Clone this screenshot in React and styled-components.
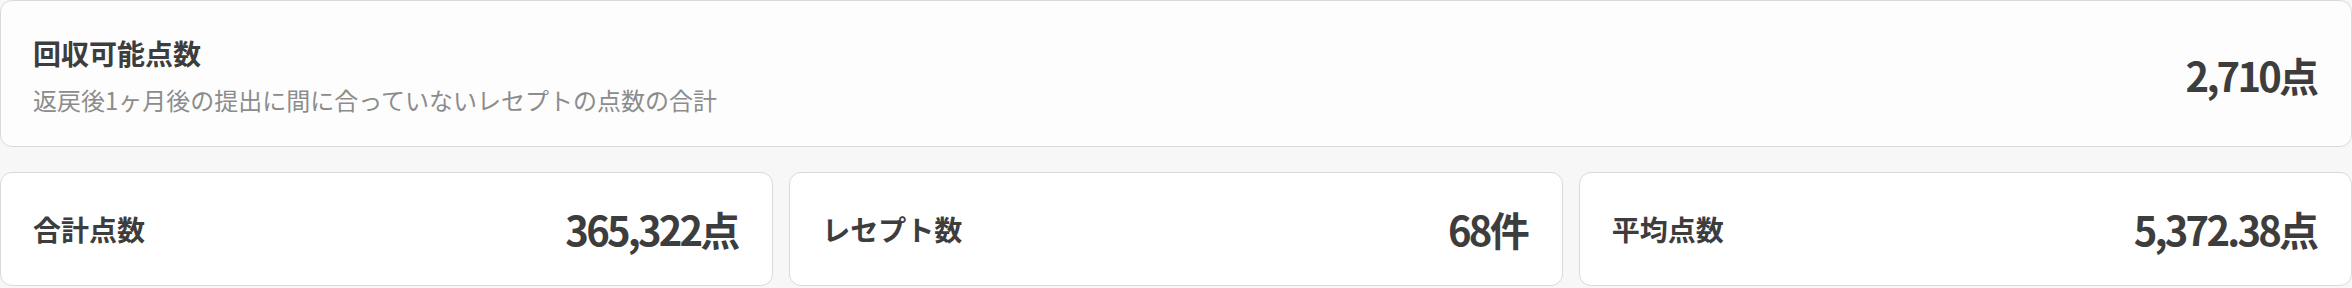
import React from "react";
import styled, { createGlobalStyle } from "styled-components";

const GlobalStyle = createGlobalStyle`
  html, body {
    margin: 0;
    padding: 0;
    background: #f7f7f7;
  }
  body {
    font-family: "Noto Sans CJK JP", "Noto Sans", sans-serif;
    color: #3d3d3d;
  }
  * { box-sizing: border-box; }
`;

const Page = styled.div`
  display: flex;
  flex-direction: column;
  gap: 25px;
`;

const Card = styled.div`
  display: flex;
  align-items: center;
  justify-content: space-between;
  background: #ffffff;
  border: 1px solid #d6d9dd;
  border-radius: 12px;
`;

const SummaryCard = styled(Card)`
  padding: 31px 32px 28px;
  background: #fdfdfd;
`;

const StatCard = styled(Card)`
  padding: 26px 32px;
`;

const TextBlock = styled.div`
  display: flex;
  flex-direction: column;
  gap: 8px;
`;

const Title = styled.div`
  font-size: 28px;
  font-weight: 700;
  line-height: 42px;
  color: #3d3d3d;
`;

const Description = styled.div`
  font-size: 24px;
  font-weight: 400;
  line-height: 36px;
  color: #8c8c8c;
`;

const Value = styled.div`
  font-size: 40px;
  font-weight: 700;
  line-height: 60px;
  letter-spacing: -0.07em;
  padding-right: 0.07em;
  color: #3d3d3d;
  white-space: nowrap;
`;

const Row = styled.div`
  display: grid;
  grid-template-columns: repeat(3, 1fr);
  gap: 16px;
`;

const stats = [
  { label: "合計点数", value: "365,322点" },
  { label: "レセプト数", value: "68件" },
  { label: "平均点数", value: "5,372.38点" },
];

export default function App() {
  return (
    <>
      <GlobalStyle />
      <Page>
        <SummaryCard>
          <TextBlock>
            <Title>回収可能点数</Title>
            <Description>返戻後1ヶ月後の提出に間に合っていないレセプトの点数の合計</Description>
          </TextBlock>
          <Value>2,710点</Value>
        </SummaryCard>
        <Row>
          {stats.map((s) => (
            <StatCard key={s.label}>
              <Title>{s.label}</Title>
              <Value>{s.value}</Value>
            </StatCard>
          ))}
        </Row>
      </Page>
    </>
  );
}
